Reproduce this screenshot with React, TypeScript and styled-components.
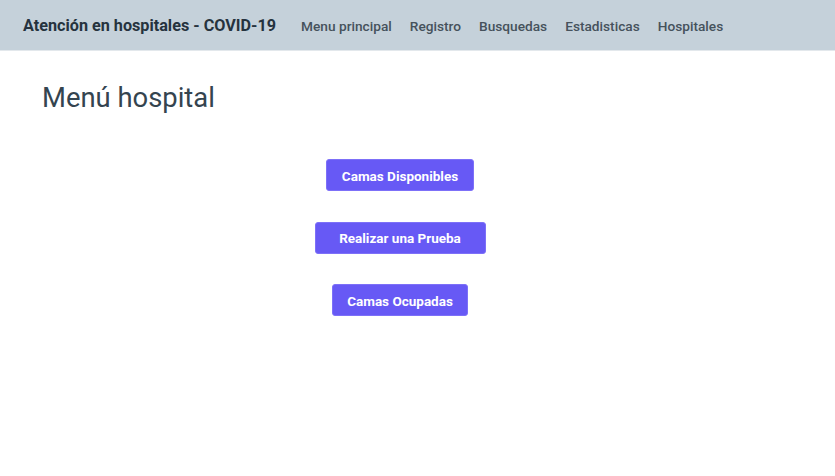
import React from "react";
import styled, { createGlobalStyle } from "styled-components";

const Global = createGlobalStyle`
  html, body { margin: 0; padding: 0; background: #fff; }
  body { font-family: Roboto, "Liberation Sans", sans-serif; }
`;

const NavBar = styled.header`
  height: 51px;
  background: #c5d1da;
  display: flex;
  align-items: center;
  padding: 1px 23px 0;
  border-bottom: 1px solid #e3e8ec;
  box-sizing: border-box;
`;

const Brand = styled.div`
  font-size: 16.2px;
  font-weight: 700;
  color: #26333e;
  margin-right: 25px;
`;

const NavLinks = styled.nav`
  display: flex;
  gap: 18px;
`;

const NavLink = styled.a`
  font-size: 13.7px;
  color: #46525c;
  font-weight: 500;
  text-decoration: none;
`;

const Main = styled.main`
  width: 800px;
  padding: 0 0 0 42px;
  box-sizing: border-box;
`;

const Heading = styled.h1`
  margin: 31px 0 0;
  font-size: 27.4px;
  font-weight: 400;
  color: #34444f;
  line-height: 32px;
`;

const Buttons = styled.div`
  display: flex;
  flex-direction: column;
  align-items: center;
  gap: 30.5px;
  margin-top: 45px;
  margin-left: -42px;
`;

const Button = styled.button<{ $w: number }>`
  width: ${(p) => p.$w}px;
  height: 32px;
  padding-top: 2px;
  background: #6759f5;
  color: #fff;
  border: 1px solid #7d70f8;
  border-radius: 3px;
  font-family: inherit;
  font-size: 13.5px;
  font-weight: 700;
  cursor: pointer;
`;

export default function App() {
  return (
    <>
      <Global />
      <NavBar>
        <Brand>Atención en hospitales - COVID-19</Brand>
        <NavLinks>
          <NavLink>Menu principal</NavLink>
          <NavLink>Registro</NavLink>
          <NavLink>Busquedas</NavLink>
          <NavLink>Estadisticas</NavLink>
          <NavLink>Hospitales</NavLink>
        </NavLinks>
      </NavBar>
      <Main>
        <Heading>Menú hospital</Heading>
        <Buttons>
          <Button $w={148}>Camas Disponibles</Button>
          <Button $w={171}>Realizar una Prueba</Button>
          <Button $w={136}>Camas Ocupadas</Button>
        </Buttons>
      </Main>
    </>
  );
}
